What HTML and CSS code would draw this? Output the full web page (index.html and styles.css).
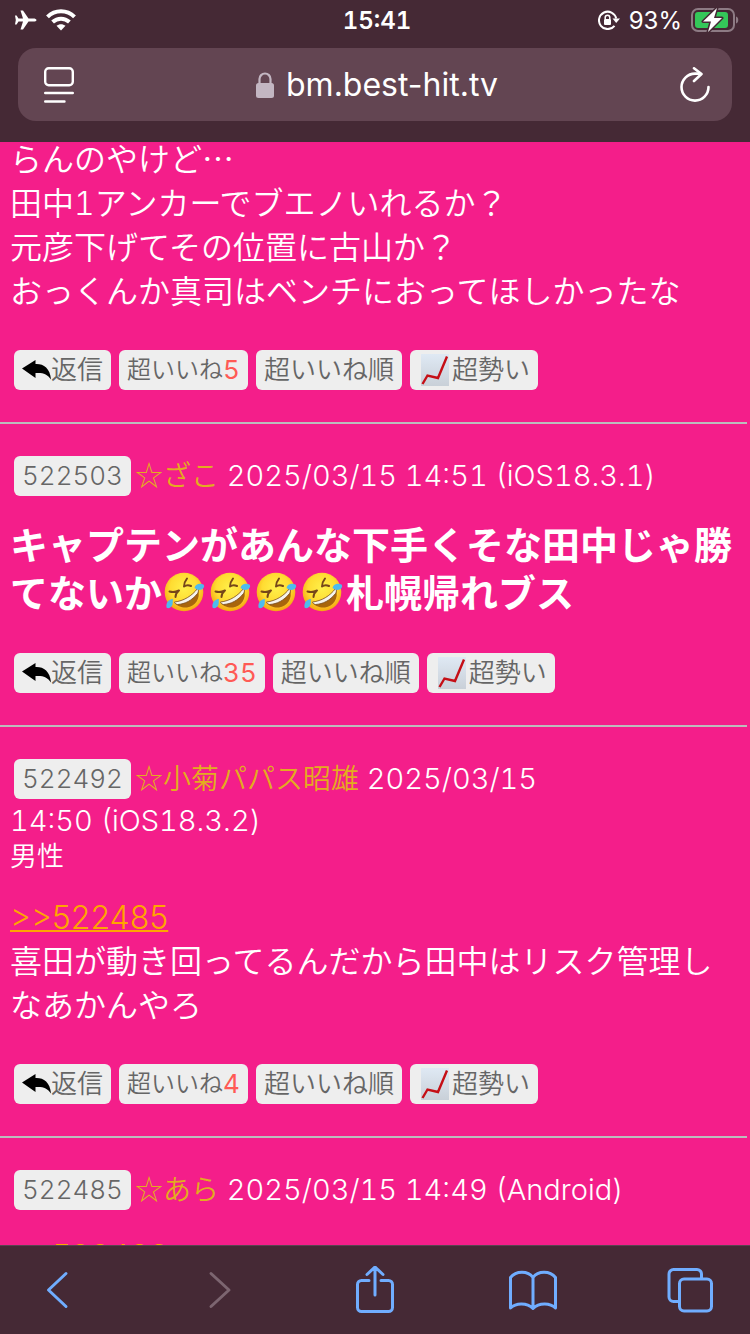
FILE: index.html
```html
<!DOCTYPE html>
<html lang="ja">
<head>
<meta charset="utf-8">
<meta name="viewport" content="width=device-width, initial-scale=1">
<title>bm.best-hit.tv</title>
<link rel="stylesheet" href="styles.css">
</head>
<body>
<svg class="defs" aria-hidden="true">
  <defs>
    <radialGradient id="face" cx="50%" cy="40%" r="60%">
      <stop offset="0" stop-color="#fff04a"/><stop offset="0.6" stop-color="#ffdc32"/><stop offset="1" stop-color="#f5a511"/>
    </radialGradient>
    <linearGradient id="paper" x1="0" y1="0" x2="0" y2="1">
      <stop offset="0" stop-color="#dfe9f4"/><stop offset="1" stop-color="#c9d0d8"/>
    </linearGradient>
    <symbol id="reply" viewBox="0 0 29 20">
      <path d="M0 8.500L13.500 0V4C21 3.500 28 7.500 29 19.500C25.500 14 21 12.500 13.500 13V18Z" fill="#000"/>
    </symbol>
    <symbol id="chart" viewBox="0 0 34 34">
      <path d="M3 1H31V33H3Z" fill="url(#paper)"/>
      <path d="M4.500 31L9.500 22.500L20 25L29 3.500" fill="none" stroke="#c50f16" stroke-width="2.400"/>
    </symbol>
    <symbol id="rofl" viewBox="0 0 46 40">
      <circle cx="22" cy="20" r="19.300" fill="url(#face)"/>
      <path d="M36 18C39 26 33 34.500 25 35.500C20 36 15 34 13 31C21.500 30.500 31 25 36 18Z" fill="#a8650c"/>
      <path d="M35.500 16.500C37 18 36.500 20 35.500 21.500C30 28.500 23 32 15.500 32.500C13.500 32 12.500 31 12.500 30C21.500 29 30 24 35.500 16.500Z" fill="#f6f4ee" stroke="#764719" stroke-width=".8"/>
      <path d="M7.500 19.500C11 20.500 14 20 17 18.500C14.500 20.500 13.500 22.500 13.500 25M25 6.500C23 9 22 11.500 22 14.500C24 13 26 12.500 29 14" fill="none" stroke="#764719" stroke-width="2" stroke-linecap="round" stroke-linejoin="round"/>
      <path d="M32.500 16C33.500 12 37.500 11 41.500 12.500C43.500 15 40.500 18 37.500 18C35.500 18 34.500 17 32.500 16Z" fill="#4ebbed"/>
      <path d="M11 27C6 27.500 4 31 4.500 35.500C6 37.500 9.500 35.500 10.500 32.500C11 30.500 10.500 28.500 11 27Z" fill="#4ebbed"/>
    </symbol>
  </defs>
</svg>

<header class="chrome">
  <div class="status">
    <div class="status-left">
      <svg width="22" height="20" viewBox="0 0 22 20" aria-label="機内モード"><path d="M21.500 10C21.500 11 20 11.600 18.500 11.600H13.500L8 19.500H5.500L8 11.600H3.500L1.600 14.500H0L.8 10L0 5.500H1.600L3.500 8.400H8L5.500 .5H8L13.500 8.400H18.500C20 8.400 21.500 9 21.500 10Z" fill="#fff"/></svg>
      <svg width="30" height="22" viewBox="0 0 30 22" aria-label="Wi-Fi"><g fill="none" stroke="#fff" stroke-width="4"><path d="M1.500 7.800C9 .3 21 .3 28.500 7.800"/><path d="M6.600 13C11.500 8.500 18.500 8.500 23.400 13"/></g><path d="M10.500 16.800C13 14.600 17 14.600 19.500 16.800L15 21.500Z" fill="#fff"/></svg>
    </div>
    <time class="clock">15:41</time>
    <div class="status-right">
      <svg width="22" height="20" viewBox="0 0 22 20" aria-label="画面の向きをロック"><path d="M18.200 8.500A8.700 8.700 0 1 0 16.500 15.800" fill="none" stroke="#fff" stroke-width="2"/><path d="M14.500 8.500H22L18.200 13Z" fill="#fff"/><rect x="6" y="9" width="7" height="6" rx="1" fill="#fff"/><path d="M7.200 9V7.500A2.300 2.300 0 0 1 11.800 7.500V9" fill="none" stroke="#fff" stroke-width="1.500"/></svg>
      <span>93%</span>
      <svg width="48" height="24" viewBox="0 0 48 24" aria-label="充電中"><rect x="1" y="1" width="42" height="22" rx="6" fill="none" stroke="#8d7b84" stroke-width="2"/><path d="M45 8.500C48 9 48 15 45 15.500Z" fill="#8d7b84"/><rect x="4" y="4" width="33" height="16" rx="3" fill="#34c759"/><path d="M26 0L12 13.500H20L17 24L31 10H23Z" fill="#fff" stroke="#452935" stroke-width="3" paint-order="stroke" stroke-linejoin="round"/></svg>
    </div>
  </div>
  <div class="address">
    <button class="icon-button" aria-label="ページメニュー"><svg width="30" height="36" viewBox="0 0 30 36" fill="none" stroke="#fff" stroke-width="2.400" stroke-linecap="round"><rect x="1.200" y="1.200" width="27.600" height="17" rx="3.500"/><path d="M1.200 26H28.800M1.200 34.500H20.500"/></svg></button>
    <div class="site">
      <svg width="18" height="26" viewBox="0 0 18 26" aria-label="安全な接続"><rect y="11" width="18" height="15" rx="2.500" fill="#c3b6c2"/><path d="M3.500 12V7A5.500 5.500 0 0 1 14.500 7V12" fill="none" stroke="#c3b6c2" stroke-width="2.200"/></svg>
      <span>bm.best-hit.tv</span>
    </div>
    <button class="icon-button" aria-label="再読み込み"><svg width="30" height="36" viewBox="0 0 30 36" fill="none" stroke="#fff" stroke-width="2.600" stroke-linecap="round" stroke-linejoin="round"><path d="M20 6.600H15A13.500 13.500 0 1 0 28.500 20.100"/><path d="M14 1.300L21.500 7L14 14"/></svg></button>
  </div>
</header>

<main class="thread">
  <article class="post continued">
    <p class="body">らんのやけど<span class="jp">…</span><br>田中1アンカーでブエノいれるか？<br>元彦下げてその位置に古山か？<br>おっくんか真司はベンチにおってほしかったな</p>
    <div class="actions">
      <button class="chip"><svg width="29" height="20"><use href="#reply"/></svg>返信</button>
      <button class="chip like"><span>超いいね</span><b>5</b></button>
      <button class="chip">超いいね順</button>
      <button class="chip"><svg width="34" height="34"><use href="#chart"/></svg>超勢い</button>
    </div>
  </article>
  <hr>
  <article class="post">
    <div class="meta"><button class="chip number">522503</button><span class="name jp">☆ざこ</span> 2025/03/15 <span class="keep">14:51 (iOS18.3.1)</span></div>
    <p class="body loud">キャプテンがあんな下手くそな田中じゃ勝てないか<svg class="emoji" width="46" height="40" role="img" aria-label="🤣"><use href="#rofl"/></svg><svg class="emoji" width="46" height="40" role="img" aria-label="🤣"><use href="#rofl"/></svg><svg class="emoji" width="46" height="40" role="img" aria-label="🤣"><use href="#rofl"/></svg><svg class="emoji" width="46" height="40" role="img" aria-label="🤣"><use href="#rofl"/></svg>札幌帰れブス</p>
    <div class="actions">
      <button class="chip"><svg width="29" height="20"><use href="#reply"/></svg>返信</button>
      <button class="chip like"><span>超いいね</span><b>35</b></button>
      <button class="chip">超いいね順</button>
      <button class="chip"><svg width="34" height="34"><use href="#chart"/></svg>超勢い</button>
    </div>
  </article>
  <hr>
  <article class="post">
    <div class="meta"><button class="chip number">522492</button><span class="name jp">☆小菊パパス昭雄</span> 2025/03/15 <span class="keep">14:50 (iOS18.3.2)</span></div>
    <div class="gender">男性</div>
    <p class="body"><a href="#p522485">&gt;&gt;522485</a><br>喜田が動き回ってるんだから田中はリスク管理しなあかんやろ</p>
    <div class="actions">
      <button class="chip"><svg width="29" height="20"><use href="#reply"/></svg>返信</button>
      <button class="chip like"><span>超いいね</span><b>4</b></button>
      <button class="chip">超いいね順</button>
      <button class="chip"><svg width="34" height="34"><use href="#chart"/></svg>超勢い</button>
    </div>
  </article>
  <hr>
  <article class="post" id="p522485">
    <div class="meta"><button class="chip number">522485</button><span class="name jp">☆あら</span> 2025/03/15 <span class="keep">14:49 (Android)</span></div>
    <p class="body"><a href="#p522483">&gt;&gt;522483</a></p>
  </article>
</main>

<nav class="toolbar">
  <button aria-label="戻る"><svg width="48" height="48" viewBox="0 0 48 48"><path d="M31 7.500L13.500 24L31 40.500"/></svg></button>
  <button aria-label="進む" disabled><svg width="48" height="48" viewBox="0 0 48 48"><path d="M18 7.500L36 24L18 40.500"/></svg></button>
  <button aria-label="共有"><svg width="48" height="48" viewBox="0 0 48 48"><path d="M18 14.500H10.500A4 4 0 0 0 6.500 18.500V41.500A4 4 0 0 0 10.500 45.500H37.500A4 4 0 0 0 41.500 41.500V18.500A4 4 0 0 0 37.500 14.500H30M24 29V1.500M16 8.500L24 1L32 8.500"/></svg></button>
  <button aria-label="ブックマーク"><svg width="48" height="48" viewBox="0 0 48 48"><path d="M24 11.500C19 4.500 7 4.500 1.500 11.500V42C7 36.500 18 36.500 24 42.500C30 36.500 41 36.500 46.500 42V11.500C41 4.500 29 4.500 24 11.500V42"/></svg></button>
  <button aria-label="タブ"><svg width="48" height="48" viewBox="0 0 48 48"><rect x="12.500" y="13" width="32" height="32" rx="4.500"/><path d="M34.500 12V8A4.500 4.500 0 0 0 30 3.500H6.500A4.500 4.500 0 0 0 2 8V31A4.500 4.500 0 0 0 6.500 35.500H12"/></svg></button>
</nav>
</body>
</html>
```
FILE: styles.css
```css
* { box-sizing: border-box; }

body {
  margin: 0;
  height: 100vh;
  display: flex;
  flex-direction: column;
  overflow: hidden;
  background: #f41e8a;
  color: #fff;
  font-family: Inter, "Noto Sans CJK JP", sans-serif;
  font-weight: 350;
}

button {
  border: 0;
  padding: 0;
  background: none;
  color: inherit;
  font: inherit;
}

svg { flex: none; }
.defs { position: absolute; width: 0; height: 0; }
.jp { font-family: "Noto Sans CJK JP", sans-serif; line-height: 0; }

/* Browser chrome */
.chrome {
  flex: none;
  background: #452935;
  padding-bottom: 21px;
}

.status {
  display: grid;
  grid-template-columns: 1fr auto 1fr;
  align-items: center;
  height: 40px;
  padding: 0 11px 0 15px;
  font-size: 24px;
  font-weight: 400;
}

.status-left, .status-right { display: flex; align-items: center; gap: 9px; }
.status-right { justify-content: flex-end; }
.clock { font-weight: 600; font-variant-numeric: tabular-nums; }

.address {
  display: flex;
  align-items: center;
  justify-content: space-between;
  height: 73px;
  margin: 8px 18px 0;
  padding: 0 22px 0 26px;
  border-radius: 18px;
  background: #634552;
  font-size: 32px;
  font-weight: 400;
}

.site { display: flex; align-items: center; gap: 12px; }
.icon-button, .icon-button svg { display: block; }

/* Thread */
.thread {
  flex: 1;
  min-height: 0;
  overflow: hidden;
  font-variant-numeric: tabular-nums;
}
.post { padding: 31px 10px 32px; }
.continued { margin-top: -4px; padding-top: 0; }

hr {
  height: 2px;
  margin: 0 3px 0 0;
  border: 0;
  background: #bcbcbc;
}

.meta { font-size: 29px; line-height: 42px; }
.name { color: #e3ac20; font-size: 28px; }
.keep { white-space: nowrap; }
.gender { font-size: 27px; line-height: 30px; }

.body {
  margin: 24px 0 0;
  font-size: 32px;
  line-height: 44px;
}
.continued .body { margin-top: 0; }
.loud { font-size: 38px; font-weight: 600; line-height: 48px; }
.body a {
  color: #ffa500;
  font-variant-numeric: normal;
  text-decoration-thickness: 2px;
}
.emoji { vertical-align: -5px; }

.actions {
  display: flex;
  gap: 8px;
  margin: 36px 4px 0;
}

.chip {
  display: inline-flex;
  align-items: center;
  height: 40px;
  padding: 0 8px;
  border-radius: 6px;
  background: #eee;
  color: #666;
  font-size: 26px;
  line-height: 40px;
}
.number { margin: 1px 4px 0; vertical-align: top; }
.like b { color: #ff5a55; font-weight: 400; }
.like span { font-size: 24px; }

/* Bottom toolbar */
.toolbar {
  flex: none;
  display: flex;
  align-items: center;
  justify-content: space-between;
  height: 89px;
  padding: 0 35px;
  border-top: 1px solid #594450;
  background: #452935;
}
.toolbar svg {
  display: block;
  fill: none;
  stroke: #70adff;
  stroke-width: 3;
  stroke-linecap: round;
  stroke-linejoin: round;
}
.toolbar :disabled svg { stroke: #7c6570; }
```
